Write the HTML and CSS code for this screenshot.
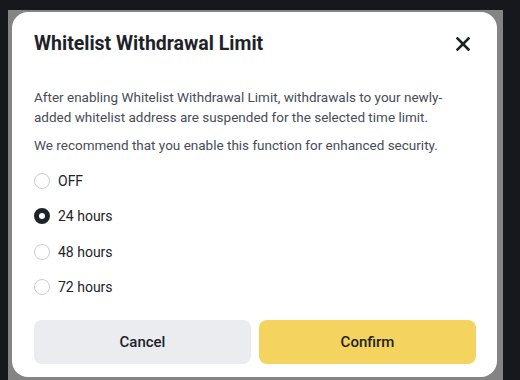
FILE: index.html
```html
<!DOCTYPE html>
<html lang="en">
<head>
<meta charset="utf-8">
<title>Whitelist Withdrawal Limit</title>
<link rel="stylesheet" href="styles.css">
</head>
<body>
<div class="overlay">
  <div class="modal">
    <div class="modal-header">
      <h2 class="modal-title">Whitelist Withdrawal Limit</h2>
      <svg class="close" width="14" height="14" viewBox="0 0 14 14" aria-label="Close">
        <path d="M1.5 1.5 L12.5 12.5 M12.5 1.5 L1.5 12.5" stroke="#1e2329" stroke-width="2.6" stroke-linecap="square"/>
      </svg>
    </div>
    <p class="desc">After enabling Whitelist Withdrawal Limit, withdrawals to your newly-added whitelist address are suspended for the selected time limit.</p>
    <p class="desc rec">We recommend that you enable this function for enhanced security.</p>
    <div class="options">
      <label class="option"><span class="radio"></span>OFF</label>
      <label class="option"><span class="radio checked"></span>24 hours</label>
      <label class="option"><span class="radio"></span>48 hours</label>
      <label class="option"><span class="radio"></span>72 hours</label>
    </div>
    <div class="actions">
      <button class="btn btn-cancel">Cancel</button>
      <button class="btn btn-confirm">Confirm</button>
    </div>
  </div>
</div>
</body>
</html>
```
FILE: styles.css
```css
html, body {
  margin: 0;
  padding: 0;
  height: 100%;
  overflow: hidden;
}
body {
  background: #17181d;
  font-family: Roboto, "Noto Sans", sans-serif;
}
.overlay {
  margin: 10px 0 0 8px;
  width: 495px;
  height: 370px;
  box-sizing: border-box;
  padding: 2px 6px 0 4px;
  background: #848484;
}
.modal {
  width: 485px;
  height: 365px;
  box-sizing: border-box;
  background: #fff;
  border-radius: 16px;
  padding: 20px 21px 0 22px;
  display: flex;
  flex-direction: column;
}
.modal-header {
  display: flex;
  align-items: center;
  justify-content: space-between;
  height: 24px;
}
.modal-title {
  margin: 0;
  font-size: 19.5px;
  line-height: 24px;
  font-weight: 700;
  color: #1e2329;
}
.close {
  margin-right: 6px;
}
.desc {
  margin: 0;
  font-size: 13.5px;
  line-height: 20px;
  color: #474d57;
}
.desc:first-of-type {
  margin-top: 31px;
}
.rec {
  margin-top: 8px;
}
.options {
  display: flex;
  flex-direction: column;
  gap: 15.4px;
  margin-top: 16px;
}
.option {
  display: flex;
  align-items: center;
  gap: 8px;
  height: 20px;
  font-size: 14px;
  color: #1e2329;
}
.radio {
  width: 14px;
  height: 14px;
  border: 1px solid #c9ccd1;
  border-radius: 50%;
  box-sizing: content-box;
}
.radio.checked {
  width: 6px;
  height: 6px;
  border: 5px solid #1e2329;
}
.actions {
  display: flex;
  gap: 8px;
  margin-top: 23px;
}
.btn {
  flex: 1;
  height: 44px;
  border: none;
  border-radius: 8px;
  font-family: inherit;
  font-size: 15px;
  font-weight: 500;
  color: #1e2329;
}
.btn-cancel {
  background: #eaecef;
}
.btn-confirm {
  background: #f4d35e;
}
```
